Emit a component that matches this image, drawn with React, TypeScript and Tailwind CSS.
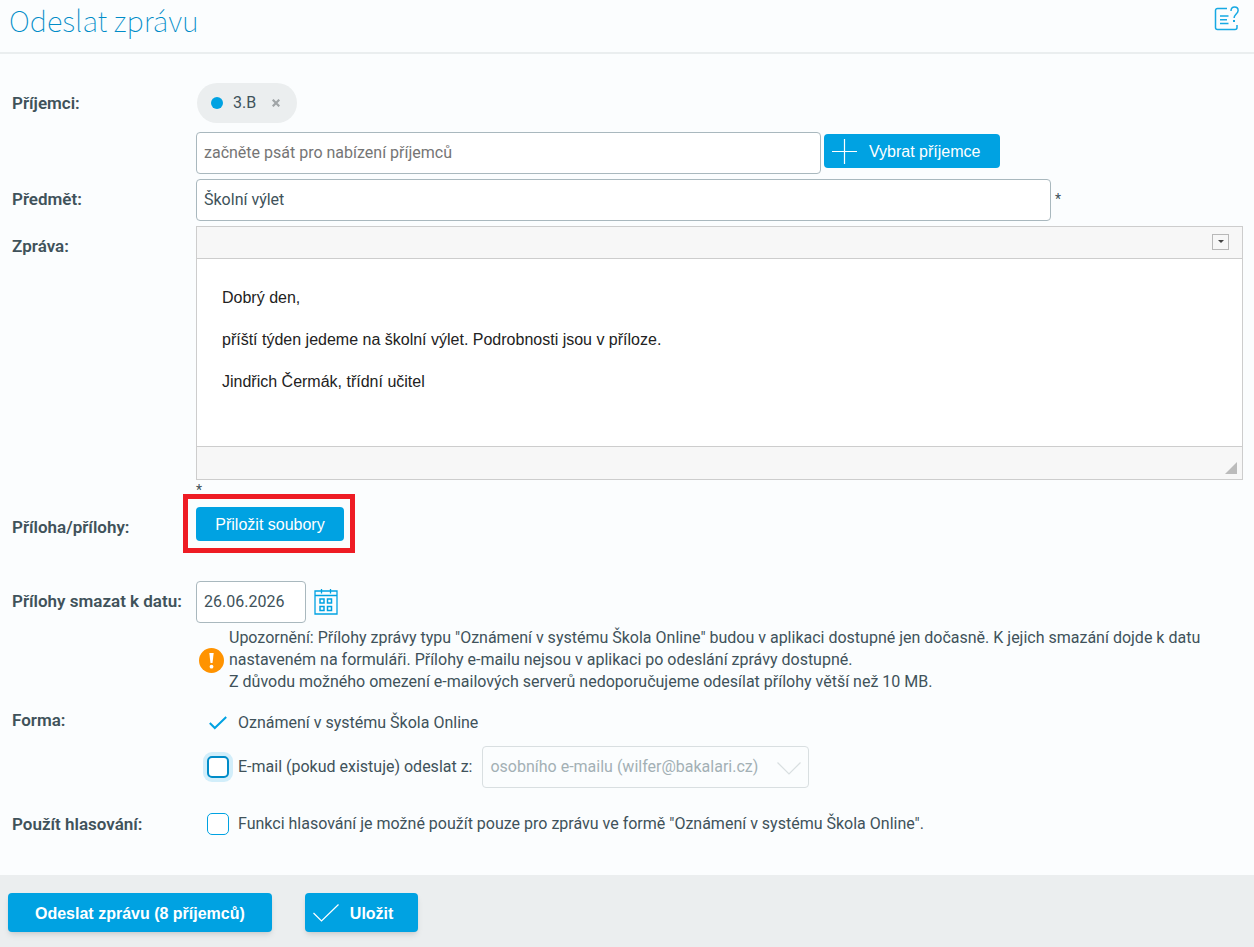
import { useState } from "react";
import type { ReactNode } from "react";

function Row({ label, htmlFor, className, labelClass, children }: {
  label: string;
  htmlFor: string;
  className: string;
  labelClass: string;
  children: ReactNode;
}) {
  return (
    <div className={`grid grid-cols-[184px_minmax(0,1fr)] ${className}`}>
      <label htmlFor={htmlFor} className={`text-[17px] font-semibold leading-6 ${labelClass}`}>
        {label}
      </label>
      <div className="min-w-0">{children}</div>
    </div>
  );
}

const field = "h-[42px] rounded-[4px] border border-[#a9b8be] bg-white px-[7px] pb-0.5 outline-none";
const blueButton = "rounded-[4px] bg-[#00a2e2] font-['Liberation_Sans',Arial,sans-serif] text-white";

function HelpIcon() {
  return (
    <svg width="26" height="26" viewBox="0 0 26 26" fill="none" stroke="#16a9e3" strokeWidth="1.5">
      <path d="M13 2.5H3.500a2 2 0 0 0-2 2v17a2 2 0 0 0 2 2h17.500a2 2 0 0 0 2-2V19" />
      <path d="M6 10h8.500M6 13.700h7M6 17.500h8.500" />
      <path d="M17 5c0-2.500 1.500-4 3.600-4 2.200 0 3.500 1.400 3.500 3.400 0 3.200-4 4-4 7.600" />
      <path d="M19 15h2" strokeWidth="2" />
    </svg>
  );
}

function CalendarIcon() {
  return (
    <svg width="24" height="26" viewBox="0 0 24 26" fill="none" stroke="#00a2e2">
      <path d="M1 2h22v23H1zM1 6.500h22" strokeWidth="1.300" />
      <path d="M7.500 0v4.500M16.500 0v4.500" strokeWidth="1.300" />
      <path d="M6 10h4v4H6zM13.500 10h4v4h-4zM6 17.500h4v4H6zM13.500 17.500h4v4h-4z" strokeWidth="1.500" />
    </svg>
  );
}

export default function App() {
  const [recipient, setRecipient] = useState("");
  const [subject, setSubject] = useState("Školní výlet");
  const [date, setDate] = useState("26.06.2026");
  const [message, setMessage] = useState(
    "Dobrý den,\n\npříští týden jedeme na školní výlet. Podrobnosti jsou v příloze.\n\nJindřich Čermák, třídní učitel"
  );

  return (
    <div className="flex min-h-screen flex-col bg-[#fbfdfe] font-[Roboto,'Open_Sans',sans-serif] text-base leading-6 text-[#40525a]">
      <header className="flex h-[54px] items-start justify-between border-b-2 border-[#eaeeef] pl-[9px] pr-[14px]">
        <h1 className="font-['Noto_Sans_CJK_SC',sans-serif] text-[29px] font-thin leading-[38px] text-[#008cc8]">
          Odeslat zprávu
        </h1>
        <button type="button" aria-label="Nápověda" className="mt-[6px]">
          <HelpIcon />
        </button>
      </header>

      <form className="flex flex-1 flex-col" onSubmit={(e) => e.preventDefault()}>
        <div className="flex-1 pl-3 pr-[11px]">
          {/* Recipients */}
          <Row label="Příjemci:" htmlFor="recipients" className="pt-[29px]" labelClass="pt-2">
            <div className="ml-px flex h-10 w-[100px] items-center rounded-full bg-[#ebeeef] pl-[14px]">
              <span className="size-3 rounded-full bg-[#00a2e2]" />
              <span className="ml-[10px]">3.B</span>
              <button type="button" aria-label="Odebrat 3.B" className="ml-4">
                <svg width="8" height="8" viewBox="0 0 8 8" stroke="#a0a5a7" strokeWidth="2.200">
                  <path d="M.7.7l6.600 6.600M7.300.7L.7 7.300" />
                </svg>
              </button>
            </div>
            <div className="mt-[9px] flex gap-[3px]">
              <input
                id="recipients"
                value={recipient}
                onChange={(e) => setRecipient(e.target.value)}
                placeholder="začněte psát pro nabízení příjemců"
                className={`${field} min-w-0 max-w-[625px] flex-1 placeholder:text-[#757575]`}
              />
              <button type="button" className={`${blueButton} mt-0.5 flex h-[34px] items-center gap-3 pl-2 pr-5 pt-0.5`}>
                <svg className="-mt-0.5" width="25" height="25" viewBox="0 0 25 25" stroke="white" strokeWidth="1.200">
                  <path d="M12.500 0v25M0 12.500h25" />
                </svg>
                Vybrat příjemce
              </button>
            </div>
          </Row>

          <Row label="Předmět:" htmlFor="subject" className="pt-[5px]" labelClass="pt-2">
            <div className="flex gap-1">
              <input
                id="subject"
                value={subject}
                onChange={(e) => setSubject(e.target.value)}
                className={`${field} min-w-0 max-w-[855px] flex-1`}
              />
              <span className="pt-2 text-sm leading-6">*</span>
            </div>
          </Row>

          {/* Message editor */}
          <Row label="Zpráva:" htmlFor="message" className="pt-[5px]" labelClass="pt-2">
            <div className="border border-[#cdcdcd] bg-white">
              <div className="flex h-8 items-center justify-end border-b border-[#cdcdcd] bg-[#f7f7f7] pb-0.5 pr-[13px]">
                <button type="button" aria-label="Rozbalit panel nástrojů" className="flex h-4 w-[17px] items-center justify-center border border-[#b8b8b8]">
                  <svg width="6" height="3" viewBox="0 0 6 3" fill="#444">
                    <path d="M0 0h6L3 3z" />
                  </svg>
                </button>
              </div>
              <textarea
                id="message"
                value={message}
                onChange={(e) => setMessage(e.target.value)}
                className="block h-[187px] w-full resize-none px-[25px] pt-7 font-['Liberation_Sans',Arial,sans-serif] leading-[21px] text-[#222] outline-none"
              />
              <div className="flex h-[33px] items-end justify-end border-t border-[#cdcdcd] bg-[#f7f7f7] pb-[5px] pr-[5px]">
                <svg width="12" height="12" viewBox="0 0 12 12" fill="#bbb">
                  <path d="M12 0v12H0z" />
                </svg>
              </div>
            </div>
            <div className="h-[14px] text-sm leading-5">*</div>
          </Row>

          {/* Attachments */}
          <Row label="Příloha/přílohy:" htmlFor="attach" className="" labelClass="pt-[21px]">
            <div className="-ml-[13px] w-fit border-5 border-[#ee1c24] pb-[7px] pl-2 pr-1.5 pt-2">
              <button id="attach" type="button" className={`${blueButton} block h-[34px] w-[148px] pt-0.5`}>
                Přiložit soubory
              </button>
            </div>
          </Row>

          <Row label="Přílohy smazat k datu:" htmlFor="date" className="pt-7" labelClass="pt-2">
            <div className="flex items-center gap-2">
              <input id="date" value={date} onChange={(e) => setDate(e.target.value)} className={`${field} w-[110px]`} />
              <button type="button" aria-label="Vybrat datum">
                <CalendarIcon />
              </button>
            </div>
            <div className="flex items-center gap-[5px] pl-[3px] pt-1">
              <svg className="shrink-0" width="25" height="25" viewBox="0 0 25 25">
                <circle cx="12.500" cy="12.500" r="12.500" fill="#ff9300" />
                <path d="M10.300 5h4.400l-1.200 10h-2z" fill="white" />
                <circle cx="12.500" cy="18.700" r="1.900" fill="white" />
              </svg>
              <p className="leading-[22px]">
                Upozornění: Přílohy zprávy typu "Oznámení v systému Škola Online" budou v aplikaci dostupné jen dočasně. K jejich smazání dojde k datu nastaveném na formuláři. Přílohy e-mailu nejsou v aplikaci po odeslání zprávy dostupné.
                <br />
                Z důvodu možného omezení e-mailových serverů nedoporučujeme odesílat přílohy větší než 10 MB.
              </p>
            </div>
          </Row>

          <Row label="Forma:" htmlFor="email" className="pt-[15px]" labelClass="">
            <div className="flex h-[30px] items-center gap-[11px] pl-[13px]">
              <svg width="18" height="14" viewBox="0 0 18 14" fill="none" stroke="#00a2e2" strokeWidth="2">
                <path d="M.8 7l5 5L17.200 1" />
              </svg>
              Oznámení v systému Škola Online
            </div>
            <div className="mt-2 flex items-center pl-[11px]">
              <input
                id="email"
                type="checkbox"
                className="size-[22px] shrink-0 appearance-none rounded-[5px] border-2 border-[#008cc8] bg-white ring-4 ring-[#d2eefa] checked:bg-[#00a2e2]"
              />
              <label htmlFor="email" className="ml-[9px]">
                E-mail (pokud existuje) odeslat z:
              </label>
              <div className="relative ml-2.5">
                <select
                  disabled
                  aria-label="Odesílací adresa"
                  className="h-[42px] w-[327px] appearance-none rounded-[4px] border border-[#d9dfe1] px-[7px] text-[#a3b0b5]"
                >
                  <option>osobního e-mailu (wilfer@bakalari.cz)</option>
                </select>
                <svg className="pointer-events-none absolute right-2 top-4" width="24" height="13" viewBox="0 0 24 13" fill="none" stroke="#d9dfe1" strokeWidth="1.200">
                  <path d="M.5.5L12 12 23.500.5" />
                </svg>
              </div>
            </div>
          </Row>

          <Row label="Použít hlasování:" htmlFor="voting" className="pb-[38px] pt-6" labelClass="">
            <div className="flex items-center gap-[9px] pl-[11px]">
              <input
                id="voting"
                type="checkbox"
                className="size-[22px] shrink-0 appearance-none rounded-[5px] border border-[#00a2e2] bg-white checked:bg-[#00a2e2]"
              />
              <label htmlFor="voting">
                Funkci hlasování je možné použít pouze pro zprávu ve formě "Oznámení v systému Škola Online".
              </label>
            </div>
          </Row>
        </div>

        <footer className="flex h-[72px] gap-[33px] bg-[#ebeeef] px-2 pt-[18px]">
          <button type="submit" className={`${blueButton} h-[39px] px-[27px] pt-0.5 font-bold shadow-md`}>
            Odeslat zprávu (8 příjemců)
          </button>
          <button type="button" className={`${blueButton} flex h-[39px] items-center gap-[11px] pl-2 pr-[25px] pt-0.5 font-bold shadow-md`}>
            <svg className="-mt-0.5" width="26" height="18" viewBox="0 0 26 18" fill="none" stroke="white" strokeWidth="1.200">
              <path d="M.5 9l8 8L25.500.5" />
            </svg>
            Uložit
          </button>
        </footer>
      </form>
    </div>
  );
}
